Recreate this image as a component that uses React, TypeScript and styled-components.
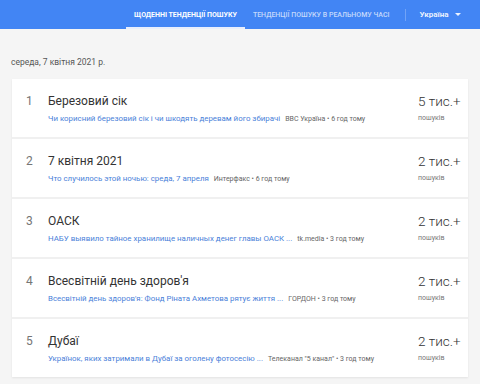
import React from "react";
import styled, { createGlobalStyle } from "styled-components";

const Global = createGlobalStyle`
  html, body { margin: 0; padding: 0; background: #f5f5f5; }
  body { font-family: Roboto, "Noto Sans", Arial, sans-serif; width: 480px; height: 384px; overflow: hidden; }
`;

const Header = styled.header`
  height: 29px;
  background: #4285f4;
  display: flex;
  align-items: stretch;
  padding-left: 126px;
  box-sizing: border-box;
`;

const Tab = styled.div<{ $active?: boolean }>`
  display: flex;
  align-items: center;
  padding: 0 8px;
  font-size: 7px;
  font-weight: ${(p) => (p.$active ? 700 : 500)};
  color: ${(p) => (p.$active ? "#ffffff" : "rgba(255,255,255,0.7)")};
  text-transform: uppercase;
  border-bottom: 2px solid ${(p) => (p.$active ? "#e8eefc" : "transparent")};
  box-sizing: border-box;
  padding-top: 2px;
  white-space: nowrap;
`;

const Divider = styled.div`
  width: 1px;
  height: 12px;
  background: rgba(255, 255, 255, 0.25);
  align-self: center;
  margin: 0 13px 0 8px;
`;

const Country = styled.div`
  display: flex;
  align-items: center;
  gap: 7px;
  font-size: 8px;
  font-weight: 700;
  color: rgba(255, 255, 255, 0.9);
`;

const Caret = styled.span`
  width: 0;
  height: 0;
  border-left: 3px solid transparent;
  border-right: 3px solid transparent;
  border-top: 3px solid rgba(255, 255, 255, 0.9);
`;

const Main = styled.main`
  padding: 0 12px;
`;

const DateLine = styled.div`
  font-size: 8.5px;
  color: #555;
  padding-top: 28px;
  margin-left: -1px;
  height: 50px;
  box-sizing: border-box;
`;

const Card = styled.div`
  background: #fff;
  box-shadow: 0 1px 2px rgba(0, 0, 0, 0.08);
`;

const Row = styled.div`
  display: flex;
  height: 60px;
  box-sizing: border-box;
  border-bottom: 2px solid #f0f0f0;
  &:last-child { border-bottom: none; height: 58px; }
`;

const Rank = styled.div`
  width: 36px;
  padding-left: 14px;
  box-sizing: border-box;
  font-size: 12px;
  color: #757575;
  padding-top: 15px;
`;

const Body = styled.div`
  flex: 1;
  min-width: 0;
  padding-top: 14px;
`;

const Title = styled.div`
  font-size: 12px;
  color: #333;
  line-height: 16px;
`;

const Sub = styled.div`
  margin-top: 5px;
  display: flex;
  align-items: baseline;
  gap: 5px;
  white-space: nowrap;
`;

const Link = styled.span`
  font-size: 7.9px;
  color: #4a7fd9;
`;

const Source = styled.span`
  font-size: 7px;
  color: #666;
`;

const Count = styled.div`
  width: 50px;
  padding-top: 13px;
`;

const Num = styled.div`
  font-size: 13.5px;
  font-weight: 300;
  color: #333;
  line-height: 18px;
`;

const Label = styled.div`
  font-size: 7px;
  color: #777;
  margin-top: 4px;
`;

const items = [
  {
    t: "Березовий сік",
    l: "Чи корисний березовий сік і чи шкодять деревам його збирачі",
    s: "BBC Україна • 6 год тому",
    n: "5 тис.+",
  },
  {
    t: "7 квітня 2021",
    l: "Что случилось этой ночью: среда, 7 апреля",
    s: "Интерфакс • 6 год тому",
    n: "2 тис.+",
  },
  {
    t: "ОАСК",
    l: "НАБУ выявило тайное хранилище наличных денег главы ОАСК ...",
    s: "tk.media • 3 год тому",
    n: "2 тис.+",
  },
  {
    t: "Всесвітній день здоров'я",
    l: "Всесвітній день здоров'я: Фонд Ріната Ахметова рятує життя ...",
    s: "ГОРДОН • 3 год тому",
    n: "2 тис.+",
  },
  {
    t: "Дубаї",
    l: "Українок, яких затримали в Дубаї за оголену фотосесію ...",
    s: 'Телеканал "5 канал" • 3 год тому',
    n: "2 тис.+",
  },
];

export default function App() {
  return (
    <>
      <Global />
      <Header>
        <Tab $active>Щоденні тенденції пошуку</Tab>
        <Tab>Тенденції пошуку в реальному часі</Tab>
        <Divider />
        <Country>
          Україна
          <Caret />
        </Country>
      </Header>
      <Main>
        <DateLine>середа, 7 квітня 2021 р.</DateLine>
        <Card>
          {items.map((it, i) => (
            <Row key={i}>
              <Rank>{i + 1}</Rank>
              <Body>
                <Title>{it.t}</Title>
                <Sub>
                  <Link>{it.l}</Link>
                  <Source>{it.s}</Source>
                </Sub>
              </Body>
              <Count>
                <Num>{it.n}</Num>
                <Label>пошуків</Label>
              </Count>
            </Row>
          ))}
        </Card>
      </Main>
    </>
  );
}
